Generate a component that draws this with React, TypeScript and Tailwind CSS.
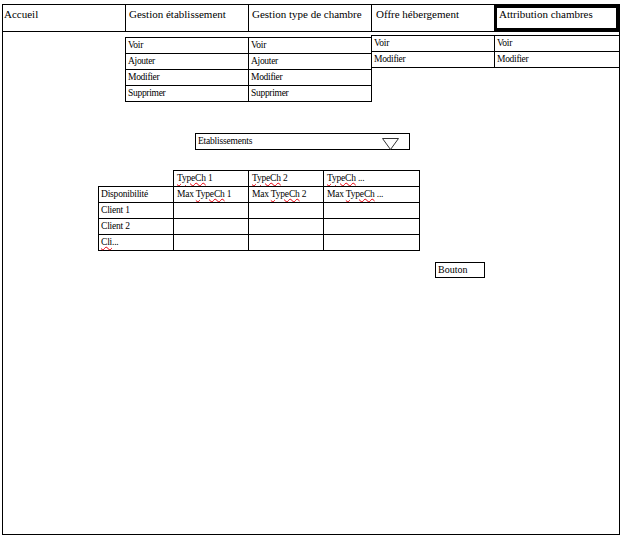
const serif = "font-[family-name:'Liberation_Serif',serif]";

const menus = [
  { items: ["Voir", "Ajouter", "Modifier", "Supprimer"], cls: "w-[124px] mt-[5px]" },
  { items: ["Voir", "Ajouter", "Modifier", "Supprimer"], cls: "w-[124px] mt-[5px] -ml-px" },
  { items: ["Voir", "Modifier"], cls: "w-[124px] mt-[3px] -ml-px" },
  { items: ["Voir", "Modifier"], cls: "flex-1 mt-[3px] -ml-px border-r-0" },
];

function Squiggle({ children }: { children: React.ReactNode }) {
  return (
    <span className="underline decoration-wavy decoration-red-600 decoration-[1px] underline-offset-[1px]">
      {children}
    </span>
  );
}

type Cell = { text?: React.ReactNode; empty?: boolean };

const rows: Cell[][] = [
  [
    { empty: true },
    { text: <><Squiggle>TypeCh</Squiggle> 1</> },
    { text: <><Squiggle>TypeCh</Squiggle> 2</> },
    { text: <><Squiggle>TypeCh</Squiggle> ...</> },
  ],
  [
    { text: "Disponibilité" },
    { text: <>Max <Squiggle>TypeCh</Squiggle> 1</> },
    { text: <>Max <Squiggle>TypeCh</Squiggle> 2</> },
    { text: <>Max <Squiggle>TypeCh</Squiggle> ...</> },
  ],
  [{ text: "Client 1" }, {}, {}, {}],
  [{ text: "Client 2" }, {}, {}, {}],
  [{ text: <><Squiggle>Cli</Squiggle>...</> }, {}, {}, {}],
];

export default function App() {
  return (
    <div className={`min-h-[536px] bg-white pl-[2px] pt-[4px] text-black ${serif}`}>
      <div className="flex h-[531px] w-[618px] flex-col border border-black">
        {/* Menu bar */}
        <div className="flex h-[27px] border-b border-black text-[11px] leading-[13px]">
          <div className="w-[123px] border-r border-black pl-[1px] pt-[3px]">Accueil</div>
          <div className="w-[123px] border-r border-black pl-[3px] pt-[3px]">Gestion établissement</div>
          <div className="w-[123px] border-r border-black pl-[3px] pt-[3px]">Gestion type de chambre</div>
          <div className="w-[122px] pl-[4px] pt-[3px]">Offre hébergement</div>
          <div className="h-[26px] flex-1 border-[3px] border-black pl-[2px] pt-[0px]">Attribution chambres</div>
        </div>

        {/* Sub menus */}
        <div className="flex items-start">
          <div className="w-[122px]" />
          {menus.map((m, i) => (
            <div key={i} className={`border-x border-t border-black ${m.cls}`}>
              {m.items.map((it) => (
                <div
                  key={it}
                  className="h-[16px] border-b border-black pl-[2px] text-[9.5px] leading-[15px] tracking-[-0.3px]"
                >
                  {it}
                </div>
              ))}
            </div>
          ))}
        </div>

        {/* Select */}
        <div className="ml-[192px] mt-[31px] flex h-[17px] w-[215px] items-end justify-between border border-black pl-[2px] pr-[10px]">
          <span className="self-center text-[9.5px] leading-[15px] tracking-[-0.2px]">Etablissements</span>
          <svg width="17" height="12" viewBox="0 0 17 12" className="mb-[-1px]">
            <polygon points="0.5,0.5 16.5,0.5 8.5,11.5" fill="none" stroke="#333" strokeWidth="1" />
          </svg>
        </div>

        {/* Table */}
        <div className="ml-[95px] mt-[20px] grid w-[322px] grid-cols-[75px_75px_75px_97px] text-[9.5px] leading-[15px] tracking-[-0.2px]">
          {rows.map((r, ri) =>
            r.map((c, ci) => {
              const last = ri === rows.length - 1;
              if (c.empty) return <div key={`${ri}-${ci}`} className="h-[16px]" />;
              return (
                <div
                  key={`${ri}-${ci}`}
                  className={`border-l border-t border-black ${last ? "h-[17px] border-b" : "h-[16px]"} ${
                    ci === 3 ? "border-r" : ""
                  } ${ci === 0 ? "pl-[2px]" : "pl-[3px]"} whitespace-nowrap`}
                >
                  {c.text}
                </div>
              );
            })
          )}
        </div>

        {/* Button */}
        <div className="ml-[432px] mt-[11px] h-[16px] w-[50px] border border-black pl-[2px] text-[10px] leading-[14px]">
          Bouton
        </div>
      </div>
    </div>
  );
}
